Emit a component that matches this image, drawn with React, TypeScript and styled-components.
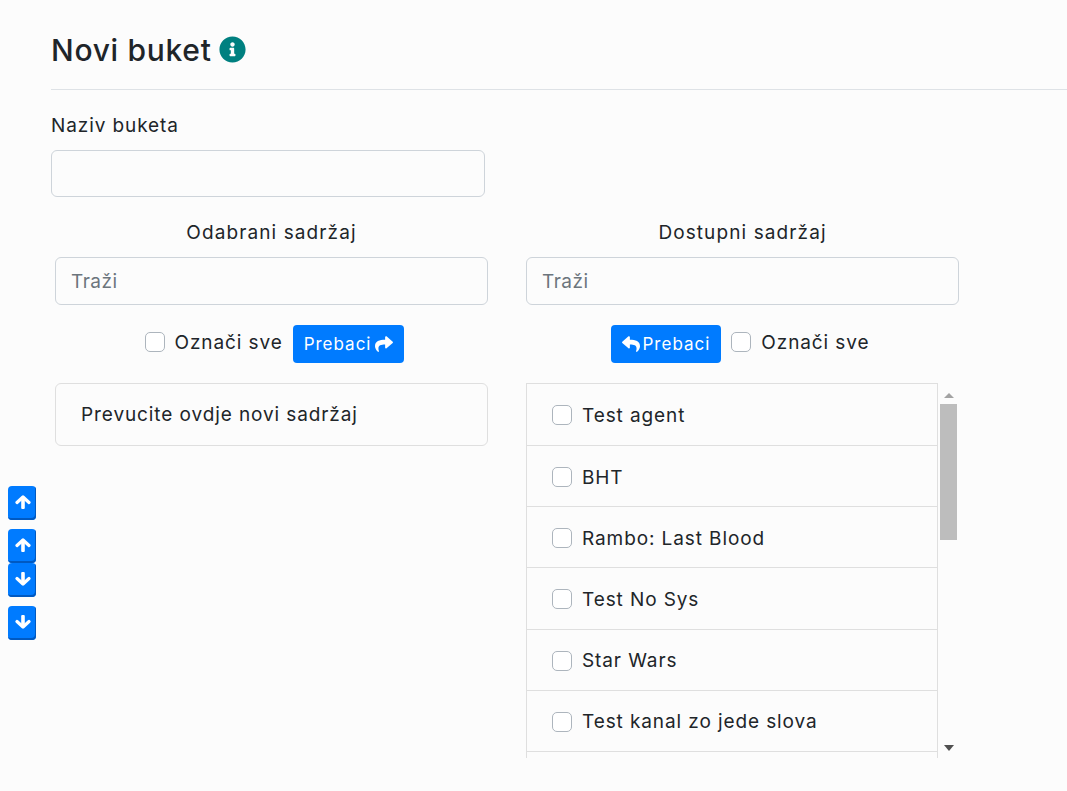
import React from 'react';
import styled, { createGlobalStyle } from 'styled-components';
import { FaInfoCircle, FaReply, FaShare } from 'react-icons/fa';

const GlobalStyle = createGlobalStyle`
    html, body {
        margin: 0;
        background: #fcfcfc;
        color: #212529;
        font-family: 'Inter', 'Open Sans', sans-serif;
    }
    * {
        box-sizing: border-box;
    }
`;

const Page = styled.div`
    display: flex;
    width: 1067px;
    height: 791px;
    overflow: hidden;
`;

const OrderColumn = styled.div`
    flex: 0 0 51px;
    display: flex;
    flex-direction: column;
    padding: 486px 0 0 8px;
`;

const OrderButton = styled.button<{ $gap?: number }>`
    width: 28px;
    height: 34px;
    margin-top: ${(p) => p.$gap || 0}px;
    padding: 0 0 2px 1px;
    display: flex;
    align-items: center;
    justify-content: center;
    color: #fff;
    background: #007bff;
    border: none;
    border-radius: 4px;
    box-shadow: inset -1px -2px 0 #0059c1;
`;

const Main = styled.div`
    flex: 1;
    min-width: 0;
`;

const Header = styled.div`
    height: 90px;
    display: flex;
    align-items: center;
    gap: 7px;
    padding-top: 10px;
    border-bottom: 1px solid #dee2e6;
`;

const Title = styled.h1`
    margin: 0;
    font-size: 30px;
    font-weight: 500;
    letter-spacing: 0.7px;
    color: #1f2529;
`;

const InfoIcon = styled(FaInfoCircle)`
    color: #008080;
    font-size: 27px;
`;

const FieldLabel = styled.label`
    display: block;
    margin-top: 23px;
    font-size: 19px;
    line-height: 25px;
    letter-spacing: 0.9px;
`;

const NameInput = styled.input`
    display: block;
    width: 434px;
    height: 47px;
    margin-top: 12px;
    background: transparent;
    border: 1px solid #ced4da;
    border-radius: 6px;
`;

const Columns = styled.div`
    display: flex;
    gap: 38px;
    padding-left: 4px;
    margin-top: 23px;
`;

const Column = styled.div`
    width: 433px;
`;

const ColumnTitle = styled.div`
    height: 25px;
    line-height: 25px;
    text-align: center;
    font-size: 19px;
    letter-spacing: 1.1px;
`;

const SearchInput = styled.input`
    display: block;
    width: 100%;
    height: 48px;
    margin-top: 12px;
    padding: 0 15px;
    background: transparent;
    border: 1px solid #ced4da;
    border-radius: 6px;
    font: inherit;
    font-size: 19px;
    letter-spacing: 0.5px;
    &::placeholder {
        color: #6c757d;
        opacity: 1;
    }
`;

const Toolbar = styled.div<{ $left?: number; $right?: number }>`
    display: flex;
    align-items: center;
    justify-content: center;
    gap: 10px;
    height: 38px;
    margin-top: 20px;
    padding-left: ${(p) => p.$left || 0}px;
    padding-right: ${(p) => p.$right || 0}px;
`;

const CheckLabel = styled.label`
    display: flex;
    align-items: center;
    gap: 10px;
    padding-bottom: 4px;
    font-size: 19px;
    letter-spacing: 0.9px;
`;

const Check = styled.input.attrs({ type: 'checkbox' })`
    appearance: none;
    flex: none;
    width: 20px;
    height: 20px;
    margin: 0;
    background: #fff;
    border: 1px solid #adb5bd;
    border-radius: 5px;
`;

const MoveButton = styled.button<{ $gap?: number }>`
    display: flex;
    align-items: center;
    gap: ${(p) => p.$gap || 4}px;
    height: 38px;
    padding: 0 11px;
    color: #fff;
    background: #007bff;
    border: none;
    border-radius: 4px;
    font: inherit;
    font-size: 17px;
    letter-spacing: 1px;
    svg {
        font-size: 18px;
    }
`;

const DropZone = styled.div`
    height: 63px;
    margin-top: 20px;
    padding: 0 25px;
    display: flex;
    align-items: center;
    background: transparent;
    border: 1px solid #dfdfdf;
    border-radius: 6px;
    font-size: 19px;
    letter-spacing: 0.9px;
`;

const ListFrame = styled.div`
    display: flex;
    height: 375px;
    margin-top: 20px;
`;

const ListBody = styled.div`
    width: 412px;
    overflow: hidden;
`;

const Row = styled.div`
    height: 61.2px;
    padding: 2px 25px 0;
    display: flex;
    align-items: center;
    gap: 10px;
    border: 1px solid #dfdfdf;
    border-top: none;
    font-size: 19px;
    letter-spacing: 0.9px;
    &:first-child {
        height: 63px;
        padding-top: 1px;
        border-top: 1px solid #dfdfdf;
    }
`;

const ScrollRail = styled.div`
    width: 21px;
    display: flex;
    flex-direction: column;
    align-items: center;
`;

const ScrollArrow = styled.div<{ $down?: boolean }>`
    flex: none;
    height: 21px;
    display: flex;
    align-items: center;
    justify-content: center;
    padding-top: ${(p) => (p.$down ? 0 : 3)}px;
    &::after {
        content: '';
        border-left: 5px solid transparent;
        border-right: 5px solid transparent;
        border-top: ${(p) => (p.$down ? '6px solid #505050' : 'none')};
        border-bottom: ${(p) => (p.$down ? 'none' : '5px solid #a3a3a3')};
    }
`;

const ScrollTrack = styled.div`
    flex: 1;
`;

const ScrollThumb = styled.div`
    width: 17px;
    height: 136px;
    margin: 0 auto;
    background: #bdbdbd;
`;

const ArrowUp = () => (
    <svg width="16" height="14" viewBox="0 0 16 14" fill="none" stroke="currentColor" strokeLinecap="round" strokeLinejoin="round">
        <path d="M2 7.5 8 2l6 5.5" strokeWidth="3.2" />
        <path d="M8 3v9.5" strokeWidth="3.6" />
    </svg>
);

const ArrowDown = () => (
    <svg width="16" height="14" viewBox="0 0 16 14" fill="none" stroke="currentColor" strokeLinecap="round" strokeLinejoin="round">
        <path d="M2 6.5 8 12l6-5.5" strokeWidth="3.2" />
        <path d="M8 1.5V11" strokeWidth="3.6" />
    </svg>
);

const available = ['Test agent', 'BHT', 'Rambo: Last Blood', 'Test No Sys', 'Star Wars', 'Test kanal zo jede slova'];

const App = () => {
    return (
        <>
            <GlobalStyle />
            <Page>
                <OrderColumn>
                    <OrderButton>
                        <ArrowUp />
                    </OrderButton>
                    <OrderButton $gap={9}>
                        <ArrowUp />
                    </OrderButton>
                    <OrderButton>
                        <ArrowDown />
                    </OrderButton>
                    <OrderButton $gap={9}>
                        <ArrowDown />
                    </OrderButton>
                </OrderColumn>
                <Main>
                    <Header>
                        <Title>Novi buket</Title>
                        <InfoIcon />
                    </Header>
                    <FieldLabel>Naziv buketa</FieldLabel>
                    <NameInput />
                    <Columns>
                        <Column>
                            <ColumnTitle>Odabrani sadržaj</ColumnTitle>
                            <SearchInput placeholder="Traži" />
                            <Toolbar $left={6}>
                                <CheckLabel>
                                    <Check />
                                    Označi sve
                                </CheckLabel>
                                <MoveButton>
                                    Prebaci <FaShare />
                                </MoveButton>
                            </Toolbar>
                            <DropZone>Prevucite ovdje novi sadržaj</DropZone>
                        </Column>
                        <Column>
                            <ColumnTitle>Dostupni sadržaj</ColumnTitle>
                            <SearchInput placeholder="Traži" />
                            <Toolbar $right={5}>
                                <MoveButton $gap={3}>
                                    <FaReply /> Prebaci
                                </MoveButton>
                                <CheckLabel>
                                    <Check />
                                    Označi sve
                                </CheckLabel>
                            </Toolbar>
                            <ListFrame>
                                <ListBody>
                                    {available.map((name) => (
                                        <Row key={name}>
                                            <Check />
                                            {name}
                                        </Row>
                                    ))}
                                    <Row />
                                </ListBody>
                                <ScrollRail>
                                    <ScrollArrow />
                                    <ScrollTrack>
                                        <ScrollThumb />
                                    </ScrollTrack>
                                    <ScrollArrow $down />
                                </ScrollRail>
                            </ListFrame>
                        </Column>
                    </Columns>
                </Main>
            </Page>
        </>
    );
};

export default App;
